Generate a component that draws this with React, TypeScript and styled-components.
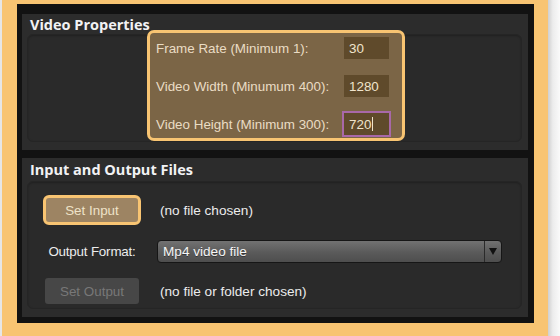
import React from "react";
import styled, { createGlobalStyle } from "styled-components";

const GlobalStyle = createGlobalStyle`
  html, body {
    margin: 0;
    padding: 0;
    background: #f8c472;
  }
  body {
    font-family: "Liberation Sans", Arial, sans-serif;
  }
`;

const Page = styled.div`
  display: flex;
  width: 560px;
  height: 336px;
  overflow: hidden;
`;

const LeftEdge = styled.div`
  width: 2px;
  background: #e6e6e6;
`;

const RightEdge = styled.div`
  width: 12px;
  background: linear-gradient(to right, #cfcfcf, #ececec 40%, #fafafa);
`;

const Frame = styled.div`
  flex: 1;
  display: flex;
  background: #f8c472;
  padding: 4px 14px 13px 15px;
`;

const DarkPanel = styled.div`
  flex: 1;
  display: flex;
  flex-direction: column;
  gap: 8px;
  background: #121212;
  padding: 10px 6px 6px 5px;
`;

const Section = styled.div<{ $height: number }>`
  height: ${(p) => p.$height}px;
  display: flex;
  flex-direction: column;
  background: #2c2c2c;
  padding: 0 6px 8px 5px;
`;

const SectionTitle = styled.div<{ $height: number }>`
  height: ${(p) => p.$height}px;
  padding-left: 3px;
  display: flex;
  align-items: center;
  font-family: "Open Sans", "DejaVu Sans", sans-serif;
  font-weight: 700;
  font-size: 14.5px;
  color: #f2f2f4;
`;

const Inset = styled.div`
  flex: 1;
  display: flex;
  background: #2a2a2a;
  border: 1px solid #252525;
  border-radius: 6px;
  box-shadow: inset 0 1px 2px rgba(0, 0, 0, 0.25);
`;

const PropertiesInset = styled(Inset)`
  align-items: flex-start;
  padding-left: 119px;
`;

const Highlight = styled.div`
  width: 258px;
  height: 111px;
  margin-top: -5px;
  box-sizing: border-box;
  border: 3px solid #f8c472;
  border-radius: 7px;
  background: #7b6546;
  display: grid;
  grid-template-columns: 1fr 45px;
  grid-auto-rows: 22px;
  row-gap: 16px;
  padding: 4px 13px 0 6px;
  align-items: center;
`;

const FieldLabel = styled.span`
  font-size: 13.4px;
  color: #eadcc4;
  white-space: nowrap;
`;

const NumberBox = styled.div<{ $focused?: boolean }>`
  height: 22px;
  box-sizing: border-box;
  background: #5f4a2b;
  padding-left: 5px;
  display: flex;
  align-items: center;
  font-size: 13.4px;
  color: #f0e4cc;
  outline: ${(p) => (p.$focused ? "2px solid #a868a8" : "none")};
`;

const Caret = styled.span`
  display: inline-block;
  width: 1px;
  height: 14px;
  margin-left: 1px;
  background: #f0e4cc;
`;

const FilesInset = styled(Inset)`
  display: grid;
  grid-template-columns: 98px 345px;
  grid-template-rows: 30px 23px 26px;
  column-gap: 16px;
  row-gap: 15px;
  align-content: start;
  align-items: center;
  justify-items: center;
  padding: 13px 0 0 15px;
`;

const Cell = styled.div`
  justify-self: stretch;
  display: flex;
  align-items: center;
  height: 100%;
`;

const ActionButton = styled.div<{ $active?: boolean }>`
  box-sizing: border-box;
  width: ${(p) => (p.$active ? 98 : 94)}px;
  height: ${(p) => (p.$active ? 30 : 26)}px;
  display: flex;
  align-items: center;
  justify-content: center;
  font-size: 13.4px;
  border-radius: ${(p) => (p.$active ? 6 : 3)}px;
  border: ${(p) => (p.$active ? "3px solid #f8c472" : "none")};
  background: ${(p) => (p.$active ? "#9d8463" : "#474747")};
  color: ${(p) => (p.$active ? "#eee2c8" : "#787878")};
`;

const Note = styled.span`
  padding-left: 3px;
  font-size: 13.6px;
  color: #ececec;
`;

const PlainLabel = styled.span`
  font-size: 13.4px;
  color: #ececec;
  letter-spacing: -0.2px;
`;

const Select = styled.div`
  width: 100%;
  height: 23px;
  box-sizing: border-box;
  display: flex;
  align-items: stretch;
  border: 1px solid #161616;
  border-radius: 4px;
  background: linear-gradient(#727272, #5a5a5a 55%, #4e4e4e);
  overflow: hidden;
`;

const SelectText = styled.div`
  flex: 1;
  display: flex;
  align-items: center;
  padding-left: 5px;
  font-size: 13.6px;
  color: #f6f6f6;
  text-shadow: 0 1px 0 rgba(0, 0, 0, 0.4);
`;

const SelectArrow = styled.div`
  width: 16px;
  display: flex;
  align-items: center;
  justify-content: center;
  border-left: 1px solid #2a2a2a;
`;

export default function App() {
  return (
    <>
      <GlobalStyle />
      <Page>
        <LeftEdge />
        <Frame>
          <DarkPanel>
            <Section $height={128}>
              <SectionTitle $height={21}>Video Properties</SectionTitle>
              <PropertiesInset>
                <Highlight>
                  <FieldLabel>Frame Rate (Minimum 1):</FieldLabel>
                  <NumberBox>30</NumberBox>
                  <FieldLabel>Video Width (Minumum 400):</FieldLabel>
                  <NumberBox>1280</NumberBox>
                  <FieldLabel>Video Height (Minimum 300):</FieldLabel>
                  <NumberBox $focused>
                    720
                    <Caret />
                  </NumberBox>
                </Highlight>
              </PropertiesInset>
            </Section>
            <Section $height={167}>
              <SectionTitle $height={23}>Input and Output Files</SectionTitle>
              <FilesInset>
                <ActionButton $active>Set Input</ActionButton>
                <Cell>
                  <Note>(no file chosen)</Note>
                </Cell>
                <PlainLabel>Output Format:</PlainLabel>
                <Cell>
                  <Select>
                    <SelectText>Mp4 video file</SelectText>
                    <SelectArrow>
                      <svg width="8" height="7" viewBox="0 0 8 7">
                        <path d="M0 0 H8 L4 7 Z" fill="#111" />
                      </svg>
                    </SelectArrow>
                  </Select>
                </Cell>
                <ActionButton>Set Output</ActionButton>
                <Cell>
                  <Note>(no file or folder chosen)</Note>
                </Cell>
              </FilesInset>
            </Section>
          </DarkPanel>
        </Frame>
        <RightEdge />
      </Page>
    </>
  );
}
